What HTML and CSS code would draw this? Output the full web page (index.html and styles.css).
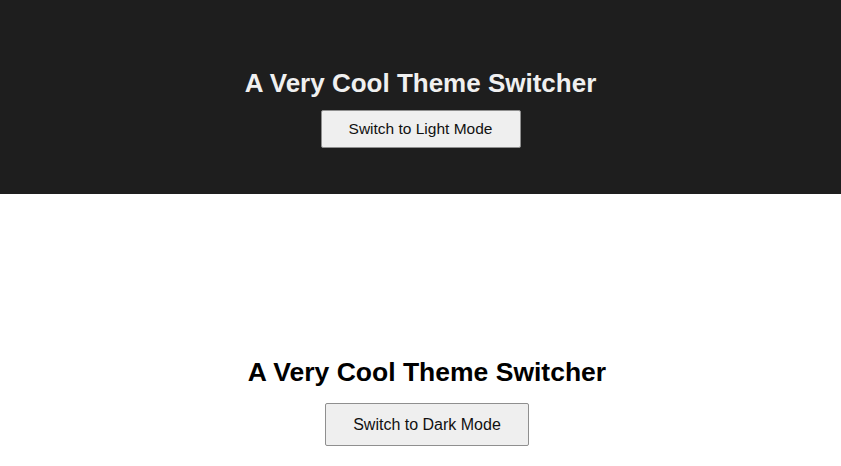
FILE: index.html
```html
<!DOCTYPE html>
<html>
<head>
<meta charset="utf-8">
<link rel="stylesheet" href="styles.css">
</head>
<body>
<section class="panel dark">
  <h1 class="title title-sm">A Very Cool Theme Switcher</h1>
  <button class="switch switch-sm">Switch to Light Mode</button>
</section>
<section class="panel light">
  <h1 class="title title-lg">A Very Cool Theme Switcher</h1>
  <button class="switch switch-lg">Switch to Dark Mode</button>
</section>
</body>
</html>
```
FILE: styles.css
```css
html, body {
  margin: 0;
  padding: 0;
  background: #ffffff;
  font-family: "Liberation Sans", Arial, sans-serif;
}
.panel {
  display: flex;
  flex-direction: column;
  align-items: center;
}
.dark {
  background: #1e1e1e;
  height: 194px;
  padding-top: 68px;
  box-sizing: border-box;
}
.light {
  background: #ffffff;
  padding-top: 163px;
  padding-left: 13px;
}
.title {
  margin: 0;
  font-weight: bold;
  line-height: 30px;
}
.title-sm {
  color: #f0f0f0;
  font-size: 26px;
  margin-bottom: 12px;
}
.title-lg {
  color: #000000;
  font-size: 26.5px;
  margin-bottom: 16px;
}
.switch {
  font-family: "Liberation Sans", Arial, sans-serif;
  background: #efefef;
  color: #111;
  border: 1px solid #8f8f8f;
  border-radius: 2px;
  box-sizing: border-box;
  padding: 0;
}
.switch-sm {
  width: 200px;
  height: 38px;
  font-size: 15.5px;
}
.switch-lg {
  width: 204px;
  height: 43px;
  font-size: 16px;
}
```
